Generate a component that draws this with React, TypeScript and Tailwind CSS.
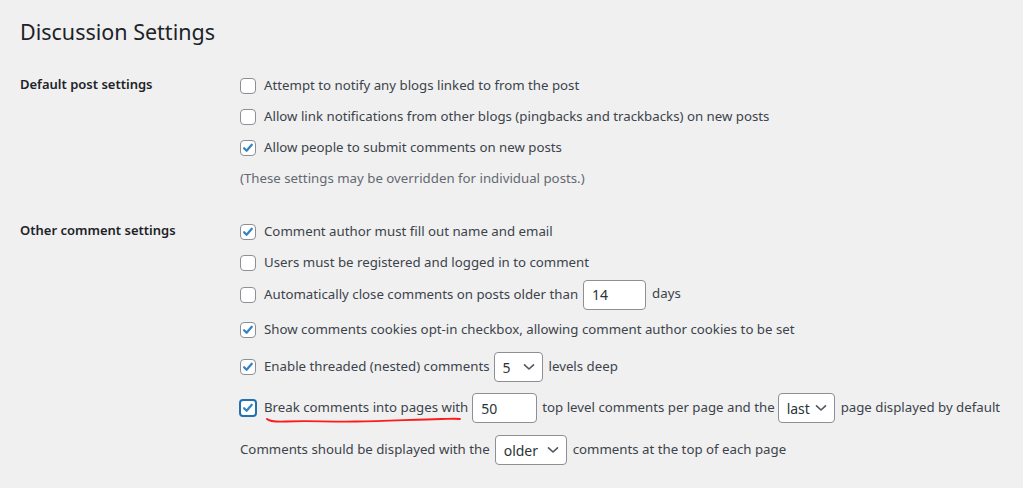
import React from "react";

const font = { fontFamily: '"Noto Sans", "Open Sans", Arial, sans-serif' };

function Check({ checked, focus }: { checked?: boolean; focus?: boolean }) {
  return (
    <span
      className={
        "inline-flex items-center justify-center shrink-0 rounded-[4px] bg-white " +
        (focus
          ? "border-2 border-[#2271b1] w-[18px] h-[18px] -ml-[1px] -mr-[1px]"
          : "border border-[#8c8f94] w-[16px] h-[16px]")
      }
    >
      {checked && (
        <svg width="14" height="14" viewBox="0 0 20 20" className="block">
          <path
            d="M4.4 10.4 L8 13.9 L15.4 5.4"
            fill="none"
            stroke="#3582c4"
            strokeWidth="3.2"
            strokeLinecap="round"
            strokeLinejoin="round"
          />
        </svg>
      )}
    </span>
  );
}

function TextInput({ value, w }: { value: string; w: string }) {
  return (
    <span
      className={
        "inline-flex items-center shrink-0 h-[30px] bg-white border border-[#8c8f94] rounded-[4px] px-[8px] text-[14px] text-[#2c3338] " +
        w
      }
    >
      {value}
    </span>
  );
}

function Select({ value, w }: { value: string; w: string }) {
  return (
    <span
      className={
        "inline-flex items-center shrink-0 justify-between h-[30px] bg-white border border-[#8c8f94] rounded-[4px] pl-[8px] pr-[7px] text-[14px] text-[#2c3338] " +
        w
      }
    >
      <span>{value}</span>
      <svg width="12" height="8" viewBox="0 0 12 8">
        <path d="M1.5 1.8 L6 6 L10.5 1.8" fill="none" stroke="#50575e" strokeWidth="1.6" strokeLinecap="round" strokeLinejoin="round" />
      </svg>
    </span>
  );
}

function Row({ h, children }: { h: string; children: React.ReactNode }) {
  return <div className={"flex items-center gap-[8px] whitespace-nowrap " + h}>{children}</div>;
}

export default function App() {
  return (
    <div className="w-[1023px] h-[488px] bg-[#f0f0f1] text-[#3c434a] text-[13.25px] overflow-hidden" style={font}>
      <div className="pl-[20px]">
        <h1 className="text-[21.5px] font-normal text-[#1d2327] h-[62px] flex items-center pt-[1px] leading-none">
          Discussion Settings
        </h1>
        <div className="flex mt-[8px]">
          <div className="w-[220px] shrink-0 font-semibold text-[13px] text-[#1d2327] h-[31px] flex items-center -mt-[1px]">
            Default post settings
          </div>
          <div className="flex flex-col">
            <Row h="h-[31px]">
              <Check />
              <span>Attempt to notify any blogs linked to from the post</span>
            </Row>
            <Row h="h-[31px]">
              <Check />
              <span>Allow link notifications from other blogs (pingbacks and trackbacks) on new posts</span>
            </Row>
            <Row h="h-[31px]">
              <Check checked />
              <span>Allow people to submit comments on new posts</span>
            </Row>
            <Row h="h-[31px]">
              <span className="text-[#646970]">(These settings may be overridden for individual posts.)</span>
            </Row>
          </div>
        </div>
        <div className="flex mt-[22px]">
          <div className="w-[220px] shrink-0 font-semibold text-[13px] text-[#1d2327] h-[31px] flex items-center -mt-[1px]">
            Other comment settings
          </div>
          <div className="flex flex-col">
            <Row h="h-[31px]">
              <Check checked />
              <span>Comment author must fill out name and email</span>
            </Row>
            <Row h="h-[31px]">
              <Check />
              <span>Users must be registered and logged in to comment</span>
            </Row>
            <Row h="h-[33px]">
              <Check />
              <span className="-mr-[3px]">Automatically close comments on posts older than</span>
              <TextInput value="14" w="w-[63px]" />
              <span className="-ml-[2px] -mt-[1px]">days</span>
            </Row>
            <Row h="h-[38px]">
              <Check checked />
              <span>Show comments cookies opt-in checkbox, allowing comment author cookies to be set</span>
            </Row>
            <Row h="h-[36px]">
              <Check checked />
              <span className="-mr-[4px]">Enable threaded (nested) comments</span>
              <Select value="5" w="w-[49px]" />
              <span className="-ml-[2px] -mt-[1px]">levels deep</span>
            </Row>
            <Row h="h-[46px]">
              <Check checked focus />
              <span className="relative -mr-[4px]">
                Break comments into pages with
                <svg
                  className="absolute left-[2px] top-[18px]"
                  width="196"
                  height="10"
                  viewBox="0 0 196 10"
                >
                  <path
                    d="M1 3 C 3 5, 8 6, 20 5.5 C 45 4.5, 60 6, 90 5.5 C 120 5, 150 3.5, 175 3 C 185 2.8, 190 2.5, 194 3"
                    fill="none"
                    stroke="#ff1a1a"
                    strokeWidth="1.8"
                    strokeLinecap="round"
                  />
                </svg>
              </span>
              <TextInput value="50" w="w-[65px]" />
              <span className="-ml-[3px] -mr-[5px]">top level comments per page and the</span>
              <Select value="last" w="w-[57px]" />
              <span className="-ml-[2px]">page displayed by default</span>
            </Row>
            <Row h="h-[38px]">
              <span className="-mr-[3px]">Comments should be displayed with the</span>
              <Select value="older" w="w-[72px]" />
              <span className="-ml-[2px]">comments at the top of each page</span>
            </Row>
          </div>
        </div>
      </div>
    </div>
  );
}
